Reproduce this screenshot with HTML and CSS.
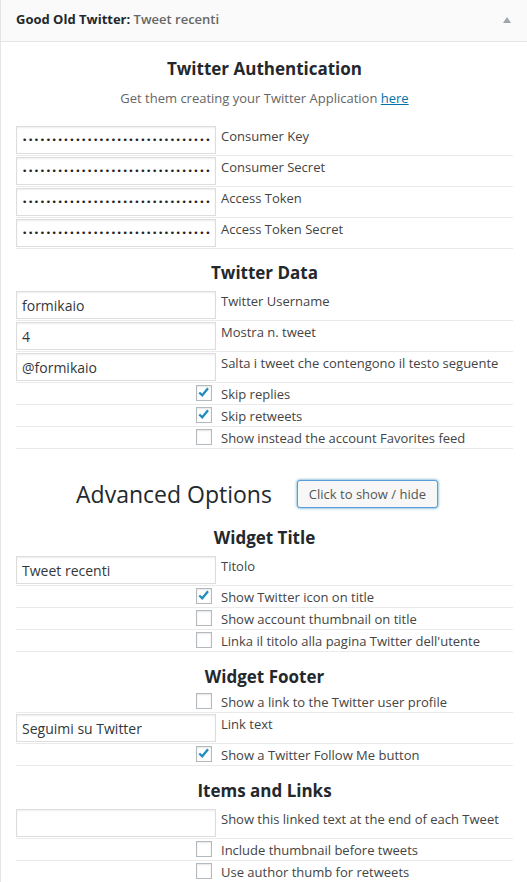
FILE: index.html
```html
<!DOCTYPE html>
<html lang="it">
<head>
<meta charset="utf-8">
<title>Good Old Twitter</title>
<link rel="stylesheet" href="styles.css">
</head>
<body>
<div class="widget">
  <div class="widget-top">
    <h3 class="widget-title">Good Old Twitter: <span class="in-title">Tweet recenti</span></h3>
    <svg class="toggle" width="8" height="6" viewBox="0 0 8 6"><path d="M4 0 L8 6 L0 6 Z" fill="#a0a5aa"/></svg>
  </div>
  <div class="widget-inside">
    <h3 class="sec first">Twitter Authentication</h3>
    <p class="desc">Get them creating your Twitter Application <a href="#">here</a></p>
    <table class="opts">
      <tr><td class="field"><input type="password" value="abcdefghijabcdefghijabcdefghijabcdefghij"></td><td class="lbl">Consumer Key</td></tr>
      <tr><td class="field"><input type="password" value="abcdefghijabcdefghijabcdefghijabcdefghij"></td><td class="lbl">Consumer Secret</td></tr>
      <tr><td class="field"><input type="password" value="abcdefghijabcdefghijabcdefghijabcdefghij"></td><td class="lbl">Access Token</td></tr>
      <tr><td class="field"><input type="password" value="abcdefghijabcdefghijabcdefghijabcdefghij"></td><td class="lbl">Access Token Secret</td></tr>
    </table>

    <h3 class="sec data">Twitter Data</h3>
    <table class="opts">
      <tr><td class="field"><input type="text" value="formikaio"></td><td class="lbl">Twitter Username</td></tr>
      <tr><td class="field"><input type="text" value="4"></td><td class="lbl">Mostra n. tweet</td></tr>
      <tr><td class="field"><input type="text" value="@formikaio"></td><td class="lbl">Salta i tweet che contengono il testo seguente</td></tr>
      <tr class="chk"><td class="field"><span class="cb on"><svg viewBox="0 0 16 16" width="14" height="14"><path d="M2.6 7.4 L6 10.6 L12.6 2.6" fill="none" stroke="#1e8cbe" stroke-width="2.6"/></svg></span></td><td class="lbl">Skip replies</td></tr>
      <tr class="chk"><td class="field"><span class="cb on"><svg viewBox="0 0 16 16" width="14" height="14"><path d="M2.6 7.4 L6 10.6 L12.6 2.6" fill="none" stroke="#1e8cbe" stroke-width="2.6"/></svg></span></td><td class="lbl">Skip retweets</td></tr>
      <tr class="chk"><td class="field"><span class="cb"></span></td><td class="lbl">Show instead the account Favorites feed</td></tr>
    </table>

    <div class="advanced">
      <h2>Advanced Options</h2>
      <button type="button" class="btn">Click to show / hide</button>
    </div>

    <h3 class="sec">Widget Title</h3>
    <table class="opts">
      <tr><td class="field"><input type="text" value="Tweet recenti"></td><td class="lbl">Titolo</td></tr>
      <tr class="chk"><td class="field"><span class="cb on"><svg viewBox="0 0 16 16" width="14" height="14"><path d="M2.6 7.4 L6 10.6 L12.6 2.6" fill="none" stroke="#1e8cbe" stroke-width="2.6"/></svg></span></td><td class="lbl">Show Twitter icon on title</td></tr>
      <tr class="chk"><td class="field"><span class="cb"></span></td><td class="lbl">Show account thumbnail on title</td></tr>
      <tr class="chk"><td class="field"><span class="cb"></span></td><td class="lbl">Linka il titolo alla pagina Twitter dell'utente</td></tr>
    </table>

    <h3 class="sec footer">Widget Footer</h3>
    <table class="opts">
      <tr class="chk"><td class="field"><span class="cb"></span></td><td class="lbl">Show a link to the Twitter user profile</td></tr>
      <tr><td class="field"><input type="text" value="Seguimi su Twitter"></td><td class="lbl">Link text</td></tr>
      <tr class="chk"><td class="field"><span class="cb on"><svg viewBox="0 0 16 16" width="14" height="14"><path d="M2.6 7.4 L6 10.6 L12.6 2.6" fill="none" stroke="#1e8cbe" stroke-width="2.6"/></svg></span></td><td class="lbl">Show a Twitter Follow Me button</td></tr>
    </table>

    <h3 class="sec">Items and Links</h3>
    <table class="opts">
      <tr><td class="field"><input type="text" value=""></td><td class="lbl">Show this linked text at the end of each Tweet</td></tr>
      <tr class="chk"><td class="field"><span class="cb"></span></td><td class="lbl">Include thumbnail before tweets</td></tr>
      <tr class="chk"><td class="field"><span class="cb"></span></td><td class="lbl">Use author thumb for retweets</td></tr>
    </table>
  </div>
</div>
</body>
</html>
```

FILE: styles.css
```css
html, body {
  margin: 0;
  padding: 0;
  background: #fff;
}
body {
  font-family: "Open Sans", "Liberation Sans", sans-serif;
  font-size: 13px;
  color: #444;
  overflow: hidden;
}
.widget {
  border-left: 1px solid #e5e5e5;
  min-height: 882px;
  background: #fff;
}
.widget-top {
  box-sizing: border-box;
  height: 42px;
  background: #fafafa;
  border-bottom: 1px solid #e5e5e5;
  display: flex;
  align-items: flex-start;
  justify-content: space-between;
  padding: 10px 16px 0 15px;
}
.widget-title {
  margin: 0;
  font-size: 13px;
  font-weight: 700;
  color: #23282d;
  line-height: 18px;
}
.in-title {
  color: #666;
  font-weight: 600;
}
.toggle {
  display: block;
  margin-top: 7px;
}
.widget-inside {
  padding: 0 14px 0 15px;
}
h3.sec {
  margin: 13px 0 6px;
  font-size: 17px;
  font-weight: 700;
  line-height: 23px;
  text-align: center;
  color: #23282d;
}
h3.sec.first {
  margin-top: 15px;
  margin-bottom: 9px;
}
h3.sec.data {
  margin-top: 12px;
}
h3.sec.footer {
  margin-bottom: 3px;
}
.desc {
  margin: 0 0 18px;
  text-align: center;
  line-height: 18px;
  color: #666;
}
.desc a {
  color: #0073aa;
}
.opts {
  width: 100%;
  border-collapse: collapse;
}
.opts tr {
  border-bottom: 1px solid #eaeaea;
}
.opts td {
  padding: 0;
  vertical-align: top;
}
.opts td.field {
  width: 200px;
  padding: 1px 0;
}
.opts td.lbl {
  padding: 2px 0 0 5px;
  line-height: 18px;
  color: #444;
}
.opts input {
  display: block;
  box-sizing: border-box;
  width: 200px;
  height: 28px;
  margin: 0;
  padding: 3px 5px;
  border: 1px solid #ddd;
  box-shadow: inset 0 1px 2px rgba(0,0,0,.07);
  font-family: "Open Sans", "Liberation Sans", sans-serif;
  font-size: 14px;
  color: #32373c;
  background: #fff;
  outline: none;
}
.opts input[type=password] {
  font-family: "DejaVu Sans", sans-serif;
  font-size: 9px;
  letter-spacing: 0.6px;
  color: #222;
}
.opts tr.chk td.field {
  width: 196px;
  padding: 2px 4px 0 0;
}
.opts tr.chk td.lbl {
  padding: 1.5px 0 1.5px 5px;
}
.cb {
  display: block;
  box-sizing: border-box;
  width: 16px;
  height: 16px;
  margin-left: auto;
  border: 1px solid #b4b9be;
  background: #fff;
  box-shadow: inset 0 1px 2px rgba(0,0,0,.1);
  position: relative;
}
.cb svg {
  position: absolute;
  left: 0;
  top: 0;
}
.advanced {
  display: flex;
  justify-content: center;
  align-items: center;
  gap: 25px;
  padding-right: 15px;
  margin: 31px 0 18px;
  height: 28px;
}
.advanced h2 {
  margin: 0;
  font-size: 23px;
  font-weight: 400;
  line-height: 28px;
  color: #23282d;
}
.btn {
  box-sizing: border-box;
  height: 28px;
  width: 141px;
  padding: 0 10px 1px;
  font-family: "Open Sans", "Liberation Sans", sans-serif;
  font-size: 13px;
  line-height: 26px;
  color: #555;
  background: #f7f7f7;
  border: 1px solid #5b9dd9;
  border-radius: 3px;
  box-shadow: 0 0 3px rgba(0,115,170,.8);
  cursor: pointer;
}
```
